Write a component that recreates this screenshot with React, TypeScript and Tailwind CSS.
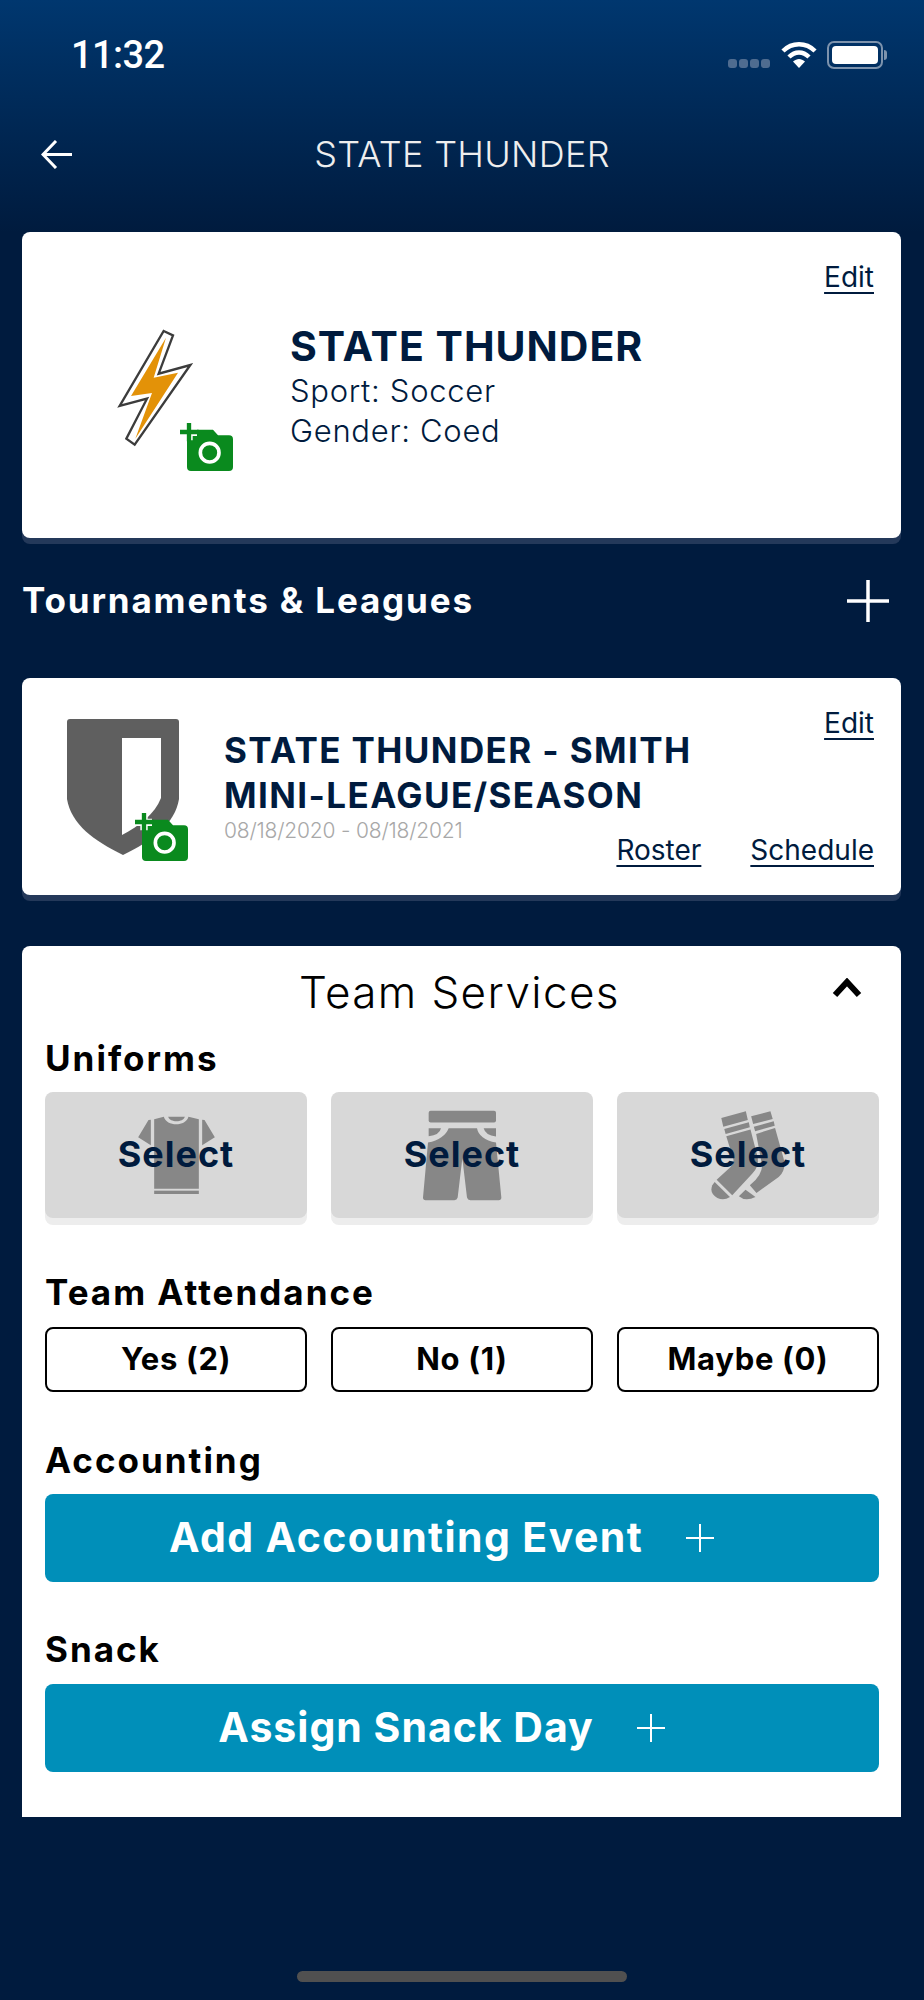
import React from "react";

const Camera = () => (
  <svg viewBox="538 605 165 150" className="w-[55px] h-[50px] block">
    <path d="M562 645 Q562 628 578 628 L640 628 L655 645 L688 645 Q700 645 700 657 L700 740 Q700 752 688 752 L574 752 Q562 752 562 740 Z" fill="#0a8a1e" />
    <circle cx="630" cy="697" r="28" fill="#0a8a1e" stroke="#fff" strokeWidth="11" />
    <path d="M568 612 V660 M544 636 H592" stroke="#fff" strokeWidth="22" />
    <path d="M568 608 V663 M541 635 H597" stroke="#0a8a1e" strokeWidth="13" />
  </svg>
);

const Bolt = () => (
  <svg viewBox="350 318 228 357" className="w-[76px] h-[119px] block">
    <polygon points="490,327 518,340 475,455 570,429 403,668 378,650 440,530 358,552" fill="#fff" stroke="#3c3c3c" strokeWidth="7" strokeLinejoin="miter" />
    <polygon points="497,347 460,467 533,452 405,650 455,513 392,522" fill="#e39208" />
  </svg>
);

const Shield = () => (
  <svg viewBox="0 0 112 136" className="w-[112px] h-[136px] block">
    <path d="M3 0 H109 Q112 0 112 3 V80 C108 105 85 122 56 136 C27 122 4 105 0 80 V3 Q0 0 3 0 Z" fill="#5f5f5f" />
    <path d="M55 19 H94 V79 C88 95 72 107 55 116 Z" fill="#fff" />
  </svg>
);

const Shirt = () => (
  <svg viewBox="355 135 230 240" className="w-[77px] h-[80px]">
    <path d="M386 150 L355 202 L393 226 L393 149 Z M554 150 L585 202 L547 226 L547 149 Z" fill="#878787" />
    <path d="M403 148 L432 140 C440 170 498 170 506 140 L537 148 L537 356 L403 356 Z" fill="#878787" />
    <path d="M445 140 H495 C490 158 450 158 445 140 Z" fill="#878787" />
    <rect x="403" y="362" width="134" height="10" fill="#878787" />
  </svg>
);

const Shorts = () => (
  <svg viewBox="305 118 240 272" className="w-[80px] h-[91px]">
    <g fill="#878787">
      <rect x="325" y="120" width="202" height="35" rx="6" />
      <path d="M325 172 L362 172 Q358 192 325 196 Z M490 172 L527 172 L527 197 Q495 193 490 172 Z" />
      <path d="M385 172 L470 172 Q476 205 527 215 L543 380 Q543 388 535 388 L450 388 Q442 388 440 380 L426 262 L412 380 Q410 388 402 388 L316 388 Q308 388 308 380 L323 215 Q372 205 385 172 Z" />
    </g>
  </svg>
);

const Socks = () => (
  <svg viewBox="298 118 232 274" className="w-[77px] h-[91px]">
    <g fill="#878787">
      <path d="M332 142 L406 122 L412 148 L338 168 Z M341 175 L415 155 L418 170 L345 190 Z" />
      <path d="M347 197 L420 177 L442 262 Q446 290 425 310 L365 375 L318 328 L360 290 Q372 276 368 265 Z" />
      <path d="M312 335 L358 380 Q340 392 320 383 Q295 368 305 345 Z" />
      <path d="M422 137 L480 122 L487 145 L428 160 Z M430 168 L490 152 L493 165 L434 182 Z" />
      <path d="M437 190 L494 172 L520 265 Q528 300 505 320 L438 368 L418 345 Q455 315 455 285 Z" />
      <path d="M405 358 L435 380 Q405 395 385 378 Z" />
    </g>
  </svg>
);

const Tile = ({ children }: { children: React.ReactNode }) => (
  <div className="grid place-items-center h-[126px] rounded-lg bg-[#d8d8d8] shadow-[0_7px_0_#ededed]">
    <div className="col-start-1 row-start-1">{children}</div>
    <span className="col-start-1 row-start-1 text-[36px] leading-[40px] -mt-[2px] font-bold text-[#001b3e] tracking-[1px]">Select</span>
  </div>
);

const Label = ({ children, className }: { children: React.ReactNode; className: string }) => (
  <div className={`h-[38px] leading-[36px] text-[35px] font-bold text-black tracking-[2px] ${className}`}>{children}</div>
);

const Action = ({ label, track }: { label: string; track: string }) => (
  <div className="flex items-center justify-center h-[88px] rounded-lg bg-[#008fb9] text-white pr-[40px]">
    <span className={`text-[41px] font-bold ${track}`}>{label}</span>
    <svg viewBox="0 0 30 30" className="w-[30px] h-[30px] ml-[42px]">
      <path d="M15 1 V29 M1 15 H29" stroke="#fff" strokeWidth="2" />
    </svg>
  </div>
);

const Link = ({ children }: { children: React.ReactNode }) => (
  <span className="text-[28px] leading-[36px] font-normal text-[#001b3e] underline underline-offset-[5px] decoration-2">{children}</span>
);

export default function App() {
  return (
    <div className="w-[924px] h-[2000px] bg-[#001b3e] font-['Inter',sans-serif]">
      <header className="h-[232px] bg-linear-to-b from-[#00376f] to-[#001b3e] text-white">
        <div className="flex items-center h-[30px] translate-y-[40px] pl-[71px] pr-[37px]">
          <span className="text-[38px] font-medium tracking-[-0.6px] font-['Roboto',sans-serif]">11:32</span>
          <div className="ml-auto flex items-center">
            <div className="flex gap-[2px] mt-[17px]">
              <span className="w-[9px] h-[9px] rounded-[3px] bg-[#4f6c90]" />
              <span className="w-[9px] h-[9px] rounded-[3px] bg-[#4f6c90]" />
              <span className="w-[9px] h-[9px] rounded-[3px] bg-[#4f6c90]" />
              <span className="w-[9px] h-[9px] rounded-[3px] bg-[#4f6c90]" />
            </div>
            <svg viewBox="0 0 36 26" className="w-[36px] h-[26px] ml-[11px]">
              <path d="M2 9 C11 0 25 0 34 9 M8 15 C14 9 22 9 28 15" stroke="#fff" strokeWidth="4.5" fill="none" />
              <path d="M12 19.5 C16 16 20 16 24 19.5 L18 26 Z" fill="#fff" />
            </svg>
            <div className="flex items-center ml-[10px]">
              <div className="w-[56px] h-[28px] rounded-[7px] border-2 border-[#7d93ad] p-[3px]">
                <div className="w-full h-full rounded-[4px] bg-white" />
              </div>
              <span className="w-[3px] h-[10px] rounded-r-full bg-[#7d93ad] ml-[1px]" />
            </div>
          </div>
        </div>
        <div className="grid grid-cols-[1fr_auto_1fr] items-center h-[50px] mt-[97px]">
          <svg viewBox="0 0 31 29" className="w-[31px] h-[29px] ml-[41px]">
            <path d="M31 14.5 H2 M15 1 L2 14.5 L15 28" stroke="#fff" strokeWidth="3" fill="none" />
          </svg>
          <h1 className="text-[36px] font-light text-[#eeeeee] tracking-[0.3px]">STATE THUNDER</h1>
        </div>
      </header>

      <main className="pl-[22px] pr-[23px]">
        <section className="flex h-[306px] rounded-lg bg-white shadow-[0_6px_0_#24395a]">
          <div className="relative w-[117px] h-[144px] ml-[95px] mt-[96px]">
            <Bolt />
            <div className="absolute right-0 bottom-0"><Camera /></div>
          </div>
          <div className="ml-[56px] mt-[89px] text-[#001b3e]">
            <div className="text-[41px] leading-[50px] font-bold tracking-[1px]">STATE THUNDER</div>
            <div className="text-[31px] leading-[40px] font-light tracking-[0.7px]">Sport: Soccer</div>
            <div className="text-[31px] leading-[40px] font-light tracking-[0.7px]">Gender: Coed</div>
          </div>
          <div className="ml-auto mt-[27px] mr-[27px]"><Link>Edit</Link></div>
        </section>

        <div className="flex items-center justify-between h-[140px] pb-[14px]">
          <h2 className="text-[35px] leading-[48px] font-bold text-white tracking-[1.85px] -mt-[2px]">Tournaments &amp; Leagues</h2>
          <svg viewBox="0 0 42 42" className="w-[42px] h-[42px] mr-[12px]">
            <path d="M21 0 V42 M0 21 H42" stroke="#fff" strokeWidth="3.5" />
          </svg>
        </div>

        <section className="flex h-[217px] rounded-lg bg-white shadow-[0_6px_0_#24395a]">
          <div className="relative w-[122px] h-[143px] ml-[45px] mt-[41px]">
            <Shield />
            <div className="absolute right-0 bottom-0"><Camera /></div>
          </div>
          <div className="flex-1 ml-[35px] mr-[27px] mt-[27px] text-[#001b3e]">
            <div className="flex justify-end h-[23px]"><Link>Edit</Link></div>
            <div className="text-[35px] leading-[45px] font-bold tracking-[1.4px]">
              STATE THUNDER - SMITH<br />MINI-LEAGUE/SEASON
            </div>
            <div className="flex items-start justify-between">
              <span className="text-[21px] leading-[26px] font-light text-[#a8a8a8] tracking-[-0.2px]">08/18/2020 - 08/18/2021</span>
              <div className="flex gap-[49px] mt-[14px]"><Link>Roster</Link><Link>Schedule</Link></div>
            </div>
          </div>
        </section>

        <section className="mt-[51px] h-[871px] rounded-t-lg bg-white pl-[23px] pr-[22px] text-black">
          <div className="flex items-center h-[94px]">
            <div className="flex-1 text-center text-[44px] font-light pl-[40px] pb-[2px] translate-x-[1px] tracking-[1.4px]">Team Services</div>
            <svg viewBox="0 0 30 20" className="w-[30px] h-[20px] mb-[10px] mr-[17px]">
              <path d="M3 17 L15 4 L27 17" stroke="#000" strokeWidth="6" fill="none" />
            </svg>
          </div>
          <Label className="">Uniforms</Label>
          <div className="grid grid-cols-3 gap-[24px] mt-[14px]">
            <Tile><Shirt /></Tile>
            <Tile><Shorts /></Tile>
            <Tile><Socks /></Tile>
          </div>
          <Label className="mt-[56px]">Team Attendance</Label>
          <div className="grid grid-cols-3 gap-[24px] mt-[15px] text-[31px] font-bold tracking-[0.7px]">
            <div className="flex items-center justify-center h-[65px] rounded-lg border-2 border-black">Yes (2)</div>
            <div className="flex items-center justify-center h-[65px] rounded-lg border-2 border-black">No (1)</div>
            <div className="flex items-center justify-center h-[65px] rounded-lg border-2 border-black">Maybe (0)</div>
          </div>
          <Label className="mt-[50px]">Accounting</Label>
          <div className="mt-[14px]"><Action label="Add Accounting Event" track="tracking-[1.4px]" /></div>
          <Label className="mt-[49px]">Snack</Label>
          <div className="mt-[15px]"><Action label="Assign Snack Day" track="tracking-[1px]" /></div>
        </section>

        <div className="w-[330px] h-[11px] mt-[154px] ml-[275px] rounded-full bg-[#505050]" />
      </main>
    </div>
  );
}
